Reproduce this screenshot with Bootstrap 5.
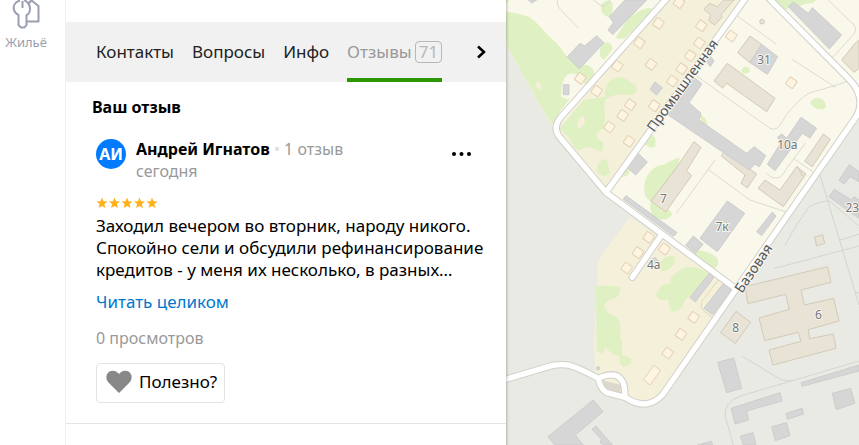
<!DOCTYPE html>
<html lang="ru">
<head>
<meta charset="utf-8">
<meta name="viewport" content="width=device-width, initial-scale=1">
<title>Отзывы</title>
<link rel="stylesheet" href="https://cdn.jsdelivr.net/npm/bootstrap@5.3.0/dist/css/bootstrap.min.css">
<style>
body { font-family: "Noto Sans", "Open Sans", sans-serif; font-size: 17px; line-height: 22px; color: #000; }
.rail { width: 66px; border-right: 1px solid #f0f0f0; }
.rail-link { color: #9a9fb1; font-size: 13px; line-height: 16px; padding-right: 13px; }
.panel { width: 440px; }
.panel-top { height: 22px; }
.tabs { background: #f1f1f1; height: 60px; padding: 0 18px 0 30px; gap: 18px; }
.tab-link { color: #222; border-bottom: 4px solid transparent; border-top: 4px solid transparent; }
.tab-link.current { color: #999; border-bottom-color: #2c9600; gap: 3px; }
.counter { color: #b8b8b8; border: 1px solid #b8b8b8; border-radius: 4px; padding: 0 3px; line-height: 20px; }
.review { padding: 0 30px 20px; border-bottom: 1px solid #e4e4e4; }
.review-title { font-size: 16px; line-height: 22px; padding: 14px 0 0 26px; margin-bottom: 21px; }
.review-head { gap: 10px; margin-bottom: 14px; }
.avatar { width: 30px; height: 30px; background: #007bff; font-size: 16px; }
.name { font-size: 16px; line-height: 20px; }
.muted { color: #999; }
.note { font-size: 16px; line-height: 24px; }
.review-text { margin: 6px 0 10px; }
.views { font-size: 16px; margin: 14px 0; }
.more { color: #07c; }
.dot { color: #ddd; }
.useful { border: 1px solid #e3e3e3; border-radius: 4px; height: 40px; padding: 0 7px 2px 9px; gap: 7px; }
.plain { border: 0; background: none; padding: 0; line-height: 0; }
.menu-btn { margin-top: 11px; }
.map { min-width: 0; background: #eaeae4; }
.map svg { width: 100%; height: 100%; }
.map-shade { width: 3px; background: linear-gradient(90deg, rgba(0,0,0,.18), rgba(0,0,0,0)); }
.lbl { font-family: "Noto Sans", sans-serif; fill: #777; stroke: #f7f6f0; stroke-width: 6px; paint-order: stroke; font-size: 36px; text-anchor: middle; }
.street { font-size: 42px; fill: #555; text-anchor: start; }
</style>
<script src="https://cdn.jsdelivr.net/npm/bootstrap@5.3.0/dist/js/bootstrap.bundle.min.js"></script>
</head>
<body>
<div class="d-flex vh-100 overflow-hidden">
  <nav class="rail flex-shrink-0 bg-white">
    <a href="#" class="rail-link d-flex flex-column align-items-center text-decoration-none">
      <svg width="30" height="34" viewBox="0 0 30 34" fill="none" stroke="#9a9fb1" stroke-width="2" stroke-linejoin="round" aria-hidden="true">
        <path d="M9 .5C4 2 2 6 3 10c.6 2.500 2.500 4 4.500 5.200V25l2.500 2.500h3.500L15.500 25V15.200C18 14 19 11.500 19 9c0-4-2.500-7.500-6-9M11.500 1v7"/>
        <path d="M17 3c2 0 3-1.500 3-4M20 0l7.500 6v15.500H16"/>
      </svg>
      <span>Жильё</span>
    </a>
  </nav>

  <main class="panel flex-shrink-0 bg-white">
    <div class="panel-top"></div>
    <nav class="tabs d-flex align-items-stretch">
      <a href="#" class="tab-link d-flex align-items-center text-decoration-none">Контакты</a>
      <a href="#" class="tab-link d-flex align-items-center text-decoration-none">Вопросы</a>
      <a href="#" class="tab-link d-flex align-items-center text-decoration-none">Инфо</a>
      <a href="#" class="tab-link current d-flex align-items-center text-decoration-none" aria-current="page">Отзывы <span class="counter">71</span></a>
      <button type="button" class="plain ms-auto" aria-label="Дальше">
        <svg width="12" height="14" viewBox="0 0 12 14" fill="none" stroke="#000" stroke-width="2.500"><path d="M2 1.500 8 7l-6 5.500"/></svg>
      </button>
    </nav>

    <h2 class="review-title fw-bold">Ваш отзыв</h2>
    <article class="review">
      <header class="review-head d-flex align-items-start">
        <div class="avatar rounded-circle text-white fw-bold d-flex align-items-center justify-content-center flex-shrink-0">АИ</div>
        <div>
          <div class="name"><b>Андрей Игнатов</b> <span class="dot">•</span> <span class="muted">1 отзыв</span></div>
          <div class="muted note">сегодня</div>
        </div>
        <button type="button" class="plain menu-btn ms-auto" aria-label="Ещё">
          <svg width="24" height="8" viewBox="0 0 24 8"><circle cx="2" cy="4" r="2"/><circle cx="9.500" cy="4" r="2"/><circle cx="17" cy="4" r="2"/></svg>
        </button>
      </header>
      <svg class="d-block" width="64" height="12" viewBox="0 0 64 12" fill="#ffb11b" role="img" aria-label="5 из 5">
        <defs><path id="star" d="M6 .5l1.500 3.800 4 .2-3.100 2.600 1 4L6 9 2.600 11.100l1-4L.5 4.500l4-.2z"/></defs>
        <use href="#star"/><use href="#star" x="12.500"/><use href="#star" x="25"/><use href="#star" x="37.500"/><use href="#star" x="50"/>
      </svg>
      <p class="review-text text-nowrap">Заходил вечером во вторник, народу никого.<br>Спокойно сели и обсудили рефинансирование<br>кредитов - у меня их несколько, в разных…</p>
      <a href="#" class="more text-decoration-none">Читать целиком</a>
      <div class="muted views">0 просмотров</div>
      <button type="button" class="useful bg-white d-flex align-items-center">
        <svg width="26" height="24" viewBox="0 0 26 24" fill="#888"><path d="M13 23 2.500 12.500C-1 9 0 3 4 1.300 7.500-.2 11 1 13 4c2-3 5.500-4.200 9-2.700 4 1.700 5 7.700 1.500 11.200z"/></svg>
        <span>Полезно?</span>
      </button>
    </article>
  </main>

  <section class="map flex-grow-1 position-relative" aria-label="Карта">
    <svg class="d-block" viewBox="18 0 1059 1335" preserveAspectRatio="xMinYMin slice">
      <defs><rect id="hut" x="-13" y="-13" width="26" height="26" rx="2" fill="#fff4df" stroke="#e0d2b8" stroke-width="3"/></defs>
      <!-- ground -->
      <path fill="#faf8ea" d="M18 0H1077V350L700 870 318 577 160 390 155 375 18 135z"/>
      <path fill="#f5f0d9" d="M500 0H735L318 577 165 395z"/>
      <path fill="#f5f0d9" d="M390 650 700 870 480 1190Q430 1230 375 1190L285 1130 282 1020 295 780z"/>
      <!-- greenery -->
      <g fill="#dff0c2">
        <path d="M18 35Q60 40 90 52C120 75 135 100 170 130C195 160 200 175 225 185L270 198Q285 210 282 224L255 255Q250 225 215 220C190 225 185 250 183 290Q200 300 210 295L180 335 155 375 18 135z"/>
        <path d="M18 0h8l-8 12zM303 15Q320-8 338 8V30L330 53Q300 45 303 15zM300 150Q305 125 325 128 340 135 336 150L312 180Q297 175 300 150zM348 112 375 70Q390 45 430 28 460 18 455 35L375 115Q350 120 348 112z"/>
        <path d="M315 290C310 265 325 240 350 232 375 228 385 245 405 255 415 265 410 285 385 285 360 280 330 285 315 300 310 330 320 360 310 385 290 395 285 405 295 420 310 420 315 435 305 455 280 450 270 435 250 445 235 455 225 450 215 430L180 385 250 300z"/>
        <path d="M292 500Q300 475 320 478L330 520Q315 535 297 522 285 515 292 500zM360 530l30-40 0 20q-5 25-30 20zM430 430 448 405Q470 400 466 440 450 448 430 430z"/>
        <path d="M433 560C435 520 465 495 490 495Q520 475 540 473L510 580 480 635Q510 620 516 645 500 665 470 655 445 640 452 605 430 590 433 560zM597 342Q620 350 622 375L605 365z"/>
        <path d="M724 210Q735 190 750 208 748 225 728 220zM930 308Q945 285 970 300 985 320 972 327 945 332 930 308zM820 0H948Q940 12 918 10L900 18 880 8 860 30Q840 25 820 0z"/>
        <path d="M590 750Q635 755 652 775 660 800 640 806L580 770zM482 790Q490 765 520 768 530 780 518 795 500 818 482 812zM627 820Q600 800 560 800 510 820 510 850 480 850 468 885 475 905 505 898 505 930 520 935 550 930 555 900 575 880 600 870z"/>
        <path d="M288 858Q330 855 360 860 365 880 345 895 315 900 312 920 325 945 350 950 365 965 360 1010 370 1025 365 1065 395 1070 395 1085 390 1098 370 1100 355 1090 360 1070 330 1060 315 1040 310 1075 290 1050 295 1015L282 1005zM423 960Q430 930 465 930 490 935 482 965 455 985 435 978zM412 1160Q425 1138 465 1150L462 1172Q430 1185 412 1172zM480 1190Q530 1120 560 1065 585 1010 625 980L490 1180z"/>
      </g>
      <g fill="#f5f0d9"><path d="M232 375Q235 345 250 348 260 360 250 375 240 390 232 385zM185 400Q200 395 215 430L225 450 190 425zM106 255q5-15 17-3 4 15-8 17z"/></g>
      <!-- paths and lanes -->
      <g fill="none" stroke="#dcdcd0" stroke-width="3">
        <path d="M172 0Q170 20 185 32L235 84M280 0 305 18Q318 22 330 0M708 45 828 132M876 178 1007 262M1040 245Q970 268 940 275 915 280 875 325 860 340 845 368 830 395 810 385L590 228M985 0 1062 75Q1075 90 1055 110L995 175M645 480 529 640M624 508 750 600 862 637M917 428 860 505Q835 555 800 520M880 475 945 520"/>
      </g>
      <g fill="none" stroke="#d4d4d0" stroke-width="3"><path d="M960 525 1077 915M985 602Q930 612 925 625 890 670 855 736M820 806 1077 738M1020 720 1077 703M985 600 1077 678M725 1068 845 1140 875 1143M1077 1083 725 1187Q670 1205 676 1250L700 1335M1065 878h12"/><path stroke="#e2d9b8" d="M655 840 605 905Q600 925 615 935L640 955"/></g>
      <!-- beige buildings -->
      <g fill="#e8e3d5" stroke="#d3cab8" stroke-width="3" stroke-linejoin="round">
        <path d="M612 28 628 10 652 20 672 0H702L662 45 667 50 644 75 626 62 632 45zM750 108 785 133 750 188 713 158zM682 190 825 295 800 335 680 250 668 264 642 243zM1025 180 1065 130 1077 120V205L1062 217z"/>
        <path d="M582 425 603 442 560 512 575 527 497 636 453 603 535 495zM675 450 770 522 742 564 723 550 735 525 664 468zM970 402 991 418 937 500 914 484zM795 540 840 570 890 500 918 522 850 620 774 565zM893 500 908 528"/>
        <path d="M708 934 752 967 706 1030 662 998zM735 860 983 800 993 847 903 870 913 915 1001 895 1017 963 925 989 929 1016 1000 1002 1008 1045 819 1095 807 1050 903 1024 895 997 794 1022 777 954 868 928 857 883 744 911zM944 711 968 704 974 730 950 738z"/>
        <circle cx="786" cy="65" r="7"/>
      </g>
      <!-- grey buildings -->
      <g fill="#d6d6d6" stroke="#cdcdcd" stroke-width="3" stroke-linejoin="round">
        <path d="M328 50 375 0H440L338 104 324 90 340 68zM202 170 240 130 254 138 290 107 312 128 238 207zM85 0h25l-15 9zM190 254h17v30h-17zM465 246 487 263 470 285 450 268zM785 133 833 170 802 223 750 188zM865 20 880 6 925 40 937 23 1025 105 988 147z"/>
        <path d="M580 230 606 252 567 308 603 340 597 360 740 460 763 440 797 467 778 500 765 492 748 510 640 437 505 345zM620 185l12-15 10 12-11 18zM410 456 442 486 407 525 380 500zM378 587 531 698 520 709 370 598zM903 352 950 385 930 414 907 400 825 512 802 493 845 425 832 412 845 402 860 415z"/>
        <path d="M682 603 734 640 652 755 600 715zM580 708 609 733 586 760 557 736zM817 636 828 648 785 707 770 695zM628 820 642 832 586 906 570 892zM670 850 695 868 638 944 612 925zM1048 494 1077 515V545L1050 530 1032 552 1017 540zM1003 568 1055 600 1062 590 1077 600V655L1062 645 987 590z"/>
        <path d="M280 1200 309 1235 226 1305 250 1335H165L144 1310zM276 1288 288 1278 337 1335H312L300 1328 305 1318zM653 1087 701 1074 725 1165 680 1178zM693 1225 840 1178 846 1203 740 1233 745 1260 705 1272zM903 1148 1077 1095V1113L906 1159zM997 1180 1052 1165 1065 1210 1009 1229zM858 1240 907 1225 911 1242 862 1258zM815 1280 860 1268 870 1307 826 1322zM721 1308 759 1298 768 1335H730zM592 1335 634 1324 638 1335z"/>
        <circle cx="294" cy="1105" r="5"/><path d="M450 780l15-8 15 15-12 20z"/>
      </g>
      <!-- small houses -->
      <g>
        <use href="#hut" transform="translate(537 8) rotate(35)"/><use href="#hut" transform="translate(475 70) rotate(35)"/><use href="#hut" transform="translate(418 128) rotate(35)"/><use href="#hut" transform="translate(352 198) rotate(35)"/><use href="#hut" transform="translate(453 193) rotate(35)"/><use href="#hut" transform="translate(241 235) rotate(35)"/><use href="#hut" transform="translate(290 273) rotate(35)"/><use href="#hut" transform="translate(391 314) rotate(35)"/><use href="#hut" transform="translate(368 346) rotate(35)"/><use href="#hut" transform="translate(328 381) rotate(35)"/><use href="#hut" transform="translate(387 424) rotate(35)"/><use href="#hut" transform="translate(463 317) rotate(35)"/><use href="#hut" transform="translate(517 243) rotate(35)"/><use href="#hut" transform="translate(545 206) rotate(35)"/><use href="#hut" transform="translate(571 167) rotate(35)"/><use href="#hut" transform="translate(598 129) rotate(35)"/><use href="#hut" transform="translate(604 77) rotate(35)"/><use href="#hut" transform="translate(694 108) rotate(35)"/><use href="#hut" transform="translate(874 248) rotate(35)"/>
        <use href="#hut" transform="translate(446 712) rotate(35)"/><use href="#hut" transform="translate(414 758) rotate(35)"/><use href="#hut" transform="translate(380 804) rotate(35)"/><use href="#hut" transform="translate(493 747) rotate(35)"/><use href="#hut" transform="translate(581 952) rotate(35)"/><use href="#hut" transform="translate(543 1003) rotate(35)"/><use href="#hut" transform="translate(503 1059) rotate(35)"/>
        <path fill="#fff4df" stroke="#e0d2b8" stroke-width="3" d="M461 1096 482 1111 450 1155 430 1139z"/>
      </g>
      <!-- roads: casing, then surface -->
      <path fill="#dcd9cc" d="M304 1140 365 1155 360 1180 315 1170z"/>
      <g fill="none" stroke="#d0d0cb" stroke-width="22" stroke-linecap="round" stroke-linejoin="round">
        <path d="M505-10 182 352Q155 385 182 415L318 577 703 863M318 577 740-10M800-12 1045 235Q1100 290 1070 348L487 1185Q440 1235 375 1192L320 1178Q300 1165 295 1135 240 1105 205 1095 175 1092 155 1097L10 1140M295 1135Q350 1110 368 1145 375 1160 375 1190M482 708 397 832"/>
      </g>
      <g fill="none" stroke="#fff" stroke-width="16" stroke-linecap="round" stroke-linejoin="round">
        <path d="M505-10 182 352Q155 385 182 415L318 577 703 863M318 577 740-10M800-12 1045 235Q1100 290 1070 348L487 1185Q440 1235 375 1192L320 1178Q300 1165 295 1135 240 1105 205 1095 175 1092 155 1097L10 1140M295 1135Q350 1110 368 1145 375 1160 375 1190M482 708 397 832"/>
      </g>
      <!-- labels -->
      <text class="lbl" x="792" y="193">31</text><text class="lbl" x="862" y="446">10а</text><text class="lbl" x="490" y="610">7</text><text class="lbl" x="666" y="694">7к</text><text class="lbl" x="461" y="806">4а</text><text class="lbl" x="1057" y="637">23</text><text class="lbl" x="955" y="956">6</text><text class="lbl" x="707" y="996">8</text>
      <text class="lbl street" transform="translate(462 398) rotate(-54)">Промышленная</text>
      <text class="lbl street" transform="translate(726 882) rotate(-56)">Базовая</text>
    </svg>
    <div class="map-shade position-absolute top-0 start-0 h-100"></div>
  </section>
</div>
</body>
</html>
